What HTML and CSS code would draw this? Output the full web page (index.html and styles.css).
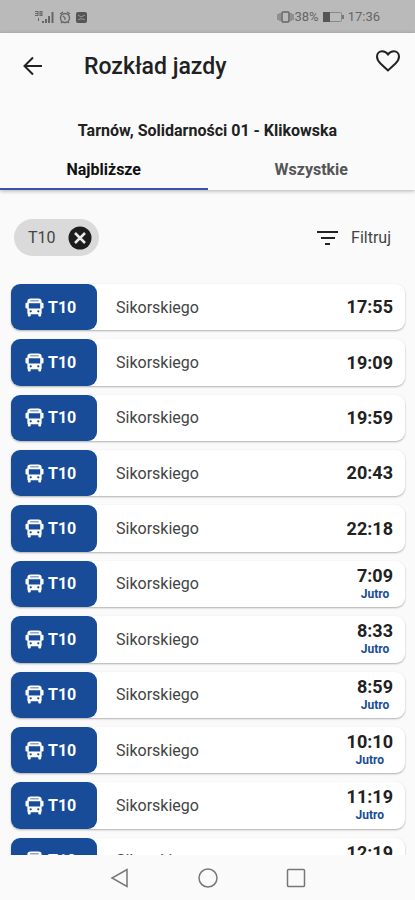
FILE: index.html
```html
<!DOCTYPE html>
<html lang="pl">
<head>
<meta charset="utf-8">
<meta name="viewport" content="width=device-width, initial-scale=1">
<title>Rozkład jazdy</title>
<link rel="stylesheet" href="styles.css">
</head>
<body>
<svg class="defs" aria-hidden="true">
  <symbol id="bus" viewBox="0 0 20 20">
    <path fill="currentColor" fill-rule="evenodd" d="M6 .5h8q3.500 0 3.500 3V5h1q1 0 1 1v4q0 1-1 1h-1v5q0 1-.5 1v1.500q0 1-1 1h-1q-1 0-1-1V17H6v1.500q0 1-1 1H4q-1 0-1-1V17q-.5 0-.5-1v-5h-1q-1 0-1-1V6q0-1 1-1h1V3.500q0-3 3.500-3zM5.500 2.500v1h9v-1zM4 5.500V11h12V5.500zM6 12.800a1.200 1.200 0 1 0 0 2.400 1.200 1.200 0 0 0 0-2.400zM14 12.800a1.200 1.200 0 1 0 0 2.400 1.200 1.200 0 0 0 0-2.400z"/>
  </symbol>
</svg>

<div class="status">
  <div class="status-group">
    <svg width="54" height="16" viewBox="0 0 54 16" fill="none" stroke="#666">
      <path stroke-width="1" d="M1 2.500h3M1 4.500h3M1 6.500h3M4 2v5M6 2v5M6 2.500h2M6 4.500h2M6 6.500h2M8 2v5M4.500 9v3"/>
      <path stroke-width="2" d="M9 14v-2M12 14v-4M15 14V7M18.500 14V3"/>
      <circle cx="31" cy="9" r="4.500" stroke-width="1.400"/>
      <path stroke-width="1.300" d="M26 5l3-2M36 5l-3-2M29 7l2 2v2M28 13l-1 1M34 13l1 1"/>
      <rect x="42" y="3" width="11" height="11" rx="2" fill="#555" stroke="none"/>
      <path stroke="#999" d="M44 6l3 2 4-2M44 11l2-1h3l2 1"/>
    </svg>
  </div>
  <div class="status-group">
    <svg width="17" height="14" viewBox="0 0 17 14" fill="none" stroke="#666">
      <rect x="5" y="2" width="7" height="10" rx="1" stroke-width="1.500"/>
      <path d="M1 4v6M3 3v8M14 3v8M16 4v6"/>
    </svg>
    <span>38%</span>
    <svg class="battery" width="23" height="12" viewBox="0 0 23 12">
      <rect x="1.500" y="1.500" width="18" height="9" rx="1" fill="none" stroke="#888"/>
      <path fill="#555" d="M1 1h7v10H1z"/>
      <path fill="#777" d="M20 4h2v4h-2z"/>
    </svg>
    <span>17:36</span>
  </div>
</div>

<header class="header">
  <div class="appbar">
    <button class="icon-btn" aria-label="Wstecz">
      <svg width="20" height="20" viewBox="0 0 20 20" fill="none" stroke="#222" stroke-width="2"><path d="M19 10H2M10 1.500L1.500 10l8.500 8.500"/></svg>
    </button>
    <h1>Rozkład jazdy</h1>
    <button class="icon-btn favorite" aria-label="Ulubione">
      <svg width="26" height="24" viewBox="0 0 26 24" fill="none" stroke="#222" stroke-width="2"><path d="M13 21.500L5.500 14.500C2.500 11.500 2 9.500 2 7.500 2 4.500 4.300 2.200 7.200 2.200c2.300 0 4.300 1.100 5.800 3.300 1.500-2.200 3.500-3.300 5.800-3.300 2.900 0 5.200 2.300 5.200 5.300 0 2-.5 4-3.500 7z"/></svg>
    </button>
  </div>
  <p class="stop">Tarnów, Solidarności 01 - Klikowska</p>
  <div class="tabs" role="tablist">
    <button class="tab active" role="tab" aria-selected="true">Najbliższe</button>
    <button class="tab" role="tab" aria-selected="false">Wszystkie</button>
  </div>
</header>

<main class="content">
  <div class="filters">
    <div class="chip">
      <span>T10</span>
      <button class="icon-btn" aria-label="Usuń T10">
        <svg width="24" height="24" viewBox="0 0 24 24"><circle cx="12" cy="12" r="11.500" fill="#1c1c1c"/><path stroke="#e8e8e8" stroke-width="2.500" d="M7 7l10 10M17 7L7 17"/></svg>
      </button>
    </div>
    <button class="filter-btn">
      <svg width="22" height="16" viewBox="0 0 22 16" stroke="#222" stroke-width="2"><path d="M0 2h21M4 8h14M8 14h5"/></svg>
      <span>Filtruj</span>
    </button>
  </div>
  <ul class="departures">
    <li class="card"><span class="line"><svg class="bus"><use href="#bus"/></svg>T10</span><span class="dest">Sikorskiego</span><span class="when"><time>17:55</time></span></li>
    <li class="card"><span class="line"><svg class="bus"><use href="#bus"/></svg>T10</span><span class="dest">Sikorskiego</span><span class="when"><time>19:09</time></span></li>
    <li class="card"><span class="line"><svg class="bus"><use href="#bus"/></svg>T10</span><span class="dest">Sikorskiego</span><span class="when"><time>19:59</time></span></li>
    <li class="card"><span class="line"><svg class="bus"><use href="#bus"/></svg>T10</span><span class="dest">Sikorskiego</span><span class="when"><time>20:43</time></span></li>
    <li class="card"><span class="line"><svg class="bus"><use href="#bus"/></svg>T10</span><span class="dest">Sikorskiego</span><span class="when"><time>22:18</time></span></li>
    <li class="card"><span class="line"><svg class="bus"><use href="#bus"/></svg>T10</span><span class="dest">Sikorskiego</span><span class="when"><time>7:09</time><small>Jutro</small></span></li>
    <li class="card"><span class="line"><svg class="bus"><use href="#bus"/></svg>T10</span><span class="dest">Sikorskiego</span><span class="when"><time>8:33</time><small>Jutro</small></span></li>
    <li class="card"><span class="line"><svg class="bus"><use href="#bus"/></svg>T10</span><span class="dest">Sikorskiego</span><span class="when"><time>8:59</time><small>Jutro</small></span></li>
    <li class="card"><span class="line"><svg class="bus"><use href="#bus"/></svg>T10</span><span class="dest">Sikorskiego</span><span class="when"><time>10:10</time><small>Jutro</small></span></li>
    <li class="card"><span class="line"><svg class="bus"><use href="#bus"/></svg>T10</span><span class="dest">Sikorskiego</span><span class="when"><time>11:19</time><small>Jutro</small></span></li>
    <li class="card"><span class="line"><svg class="bus"><use href="#bus"/></svg>T10</span><span class="dest">Sikorskiego</span><span class="when"><time>12:19</time><small>Jutro</small></span></li>
  </ul>
</main>

<nav class="sysnav">
  <button class="icon-btn" aria-label="Cofnij"><svg width="20" height="20" viewBox="0 0 20 20"><path d="M17 1.500v17L2 10z"/></svg></button>
  <button class="icon-btn" aria-label="Ekran główny"><svg width="20" height="20" viewBox="0 0 20 20"><circle cx="10" cy="10" r="9"/></svg></button>
  <button class="icon-btn" aria-label="Ostatnie"><svg width="20" height="20" viewBox="0 0 20 20"><rect x="1.500" y="1.500" width="17" height="17" rx="1"/></svg></button>
</nav>
</body>
</html>
```
FILE: styles.css
```css
* { box-sizing: border-box; }

body {
  margin: 0;
  height: 100vh;
  display: flex;
  flex-direction: column;
  background: #fafafa;
  color: #212121;
  font-family: Roboto, sans-serif;
}

button {
  font: inherit;
  color: inherit;
  background: none;
  border: 0;
  padding: 0;
}

svg { display: block; }
.defs { position: absolute; width: 0; height: 0; }
.icon-btn { display: flex; }

.status {
  flex: none;
  height: 33px;
  padding: 0 35px 0 34px;
  display: flex;
  align-items: center;
  justify-content: space-between;
  background: #bababa;
  color: #666;
  font-size: 13px;
}
.status-group { display: flex; align-items: center; }
.battery { margin: 0 3px; }

.header {
  flex: none;
  box-shadow: 0 1px 4px rgba(0, 0, 0, 0.3);
}
.appbar {
  display: flex;
  align-items: center;
  height: 66px;
  padding: 0 14px 0 23px;
}
h1 {
  flex: 1;
  margin: 0 0 0 41px;
  font-size: 23px;
  font-weight: 500;
}
.favorite { margin-bottom: 10px; }
.stop {
  margin: 0;
  padding-top: 20px;
  text-align: center;
  font-size: 16px;
  line-height: 24px;
  font-weight: 700;
}
.tabs { display: flex; }
.tab {
  flex: 1;
  height: 47px;
  padding-top: 7px;
  border-bottom: 2px solid transparent;
  font-size: 16px;
  font-weight: 700;
  color: #555;
}
.tab.active {
  color: #111;
  border-color: #3f51a5;
}

.content {
  flex: 1;
  min-height: 0;
  overflow: hidden;
}
.filters {
  display: flex;
  align-items: center;
  justify-content: space-between;
  padding: 29px 24px 28px 14px;
}
.chip {
  display: flex;
  align-items: center;
  gap: 12px;
  height: 37px;
  padding: 0 7px 0 14px;
  border-radius: 19px;
  background: #dadada;
  color: #444;
  font-size: 16px;
}
.filter-btn {
  display: flex;
  align-items: center;
  gap: 12px;
  font-size: 16px;
  color: #444;
}

.departures {
  list-style: none;
  margin: 0;
  padding: 0 10px 0 11px;
  display: grid;
  grid-auto-rows: 1fr;
  gap: 9px;
  min-height: 600px;
}
.card {
  display: flex;
  align-items: center;
  padding-right: 12px;
  border-radius: 9px;
  background: #fff;
  box-shadow: 0 1px 2px rgba(0, 0, 0, 0.3);
}
.line {
  align-self: stretch;
  width: 86px;
  display: flex;
  align-items: center;
  gap: 4px;
  padding-left: 14px;
  border-radius: 9px;
  background: #184c98;
  color: #fff;
  font-size: 16px;
  font-weight: 700;
}
.bus { width: 19px; height: 19px; }
.dest {
  flex: 1;
  margin-left: 19px;
  font-size: 16px;
  color: #444;
}
.when {
  display: flex;
  flex-direction: column;
  align-items: center;
}
.when time {
  font-size: 18px;
  line-height: 20px;
  font-weight: 700;
}
.when small {
  font-size: 12px;
  line-height: 16px;
  font-weight: 700;
  color: #184c98;
}

.sysnav {
  flex: none;
  height: 45px;
  display: flex;
  align-items: center;
  justify-content: center;
  gap: 68px;
}
.sysnav svg {
  fill: none;
  stroke: #777;
  stroke-width: 1.5;
}
```
